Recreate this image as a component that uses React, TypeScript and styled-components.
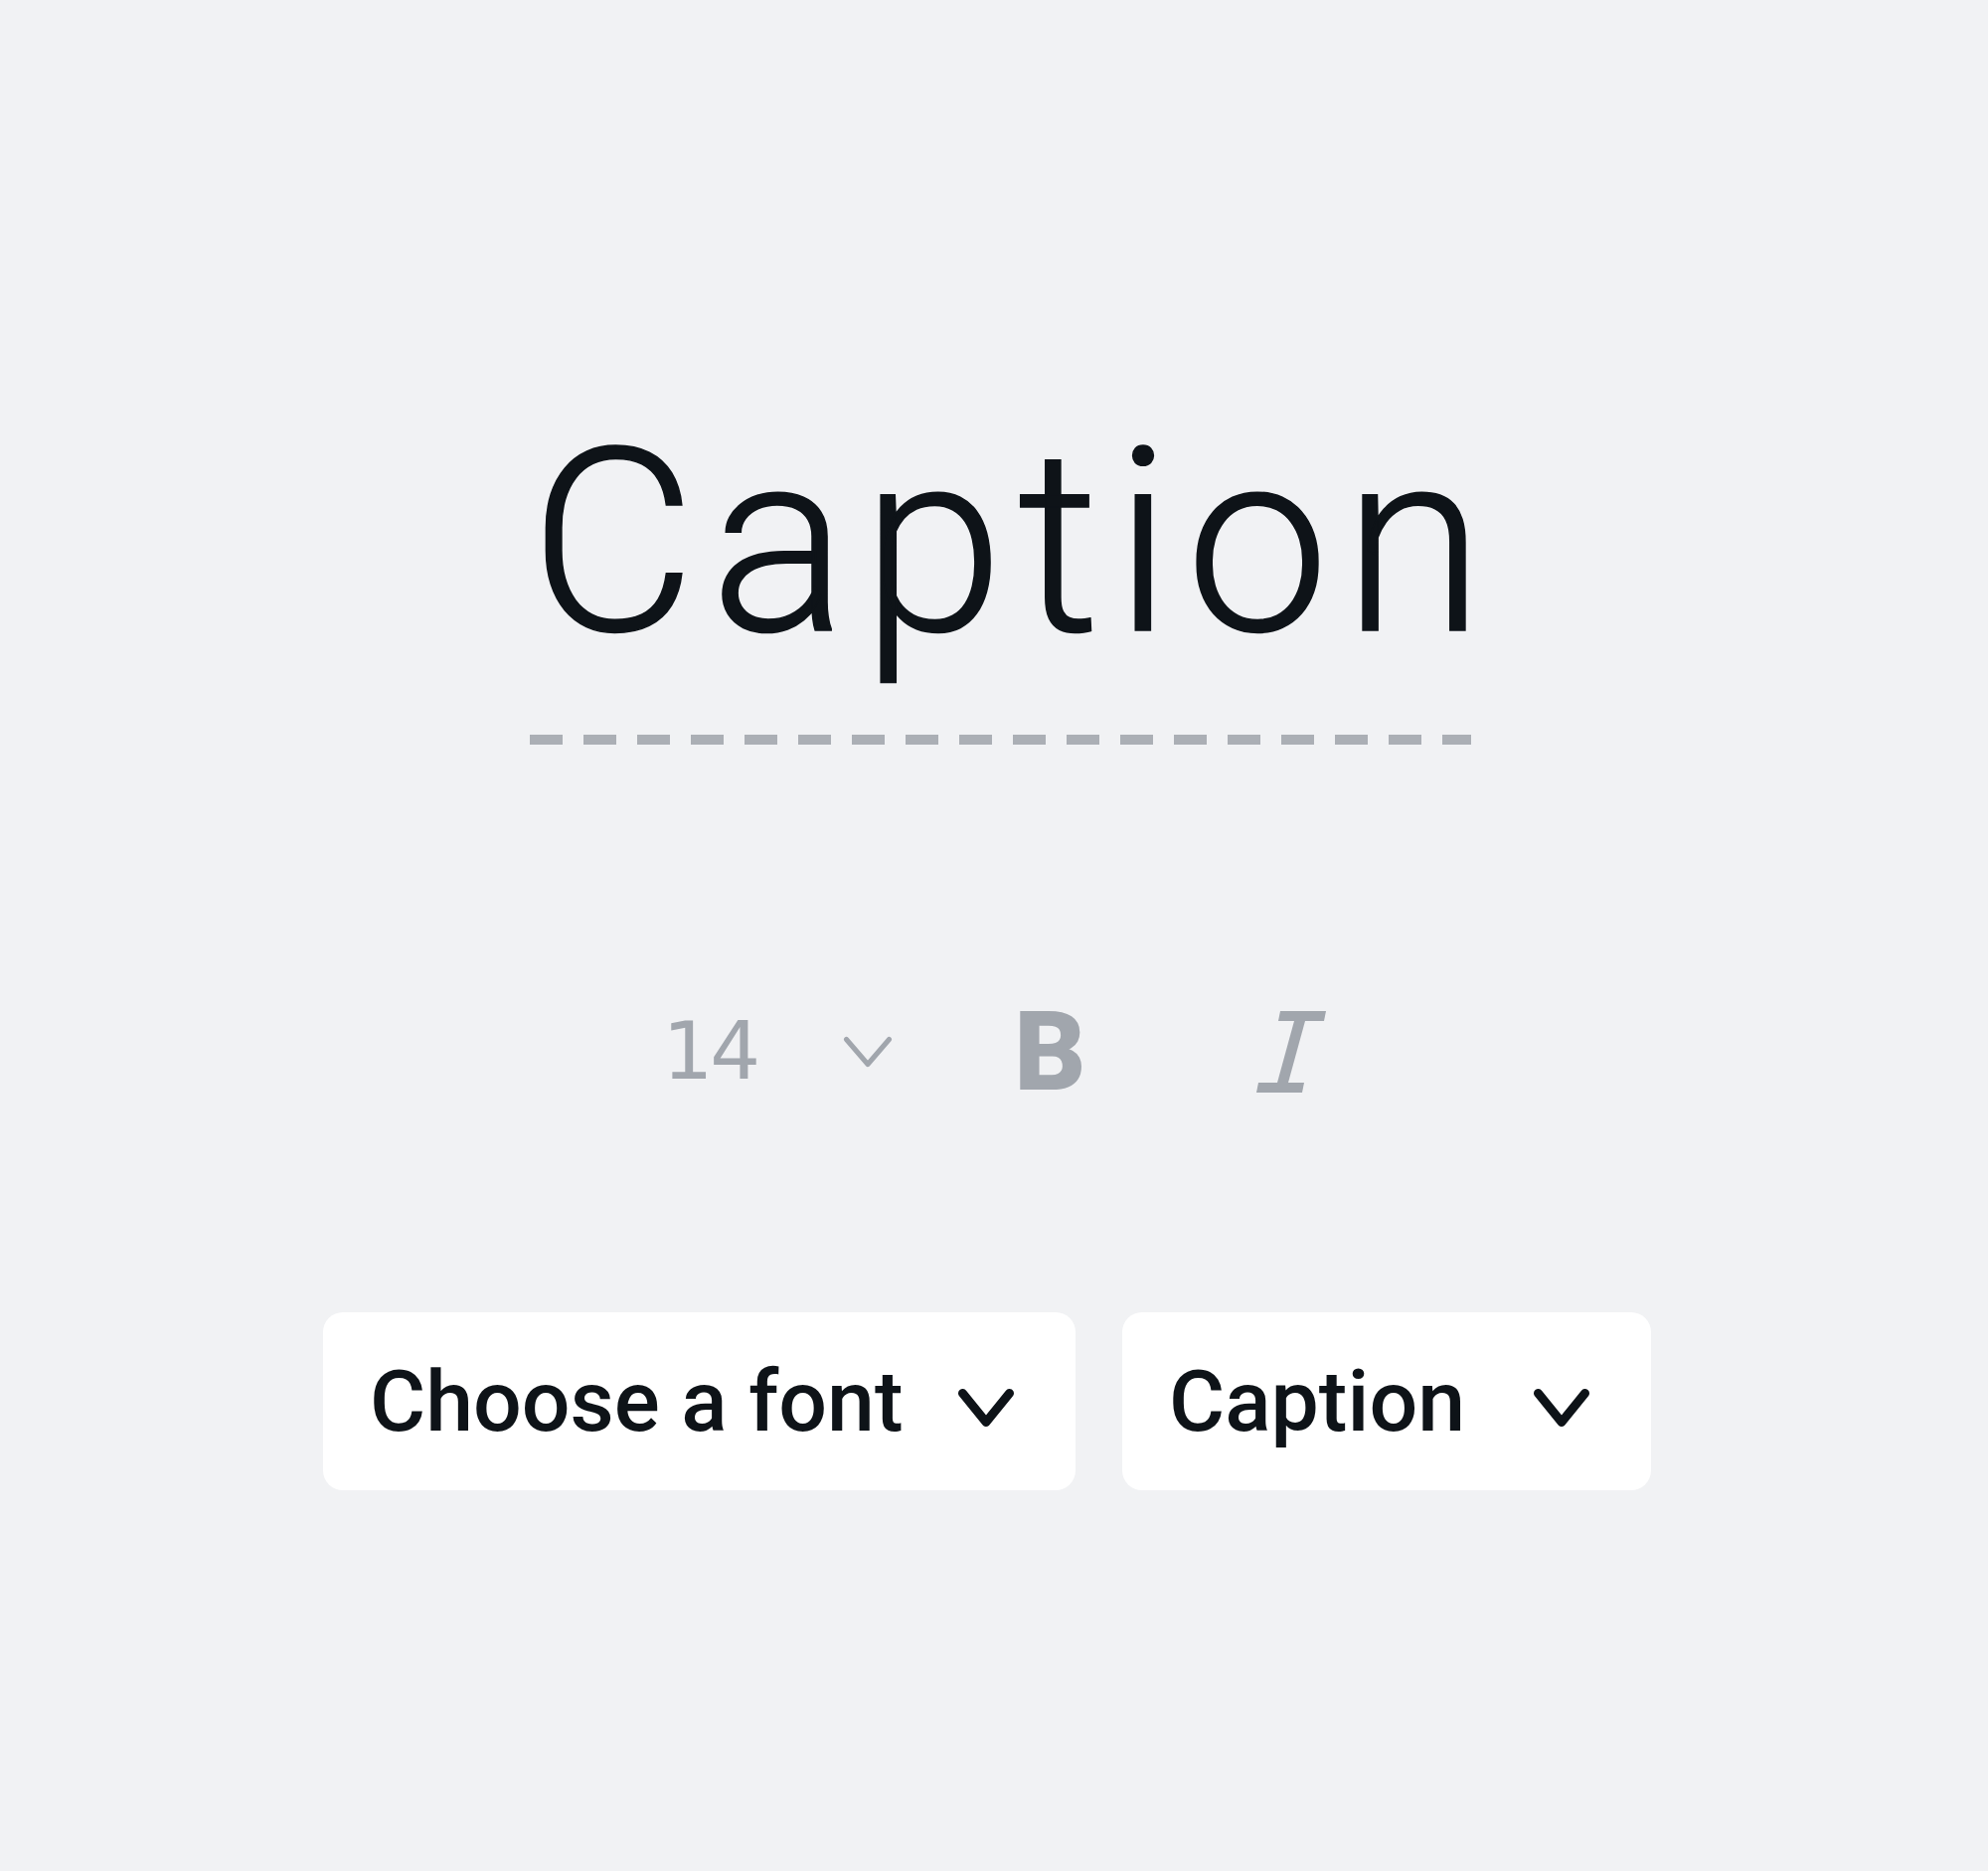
import styled, { createGlobalStyle } from "styled-components";

const GlobalStyle = createGlobalStyle`
  html, body {
    margin: 0;
    padding: 0;
    background: #f1f2f4;
  }
`;

const Page = styled.div`
  width: 2000px;
  height: 1882px;
  display: flex;
  flex-direction: column;
  align-items: center;
  padding-top: 396px;
  box-sizing: border-box;
  background: #f1f2f4;
  font-family: Roboto, "Liberation Sans", Arial, sans-serif;
`;

const TitleBlock = styled.div`
  display: flex;
  flex-direction: column;
  align-items: center;
  margin-left: 14px;
`;

const TitleText = styled.div`
  font-size: 258px;
  line-height: 300px;
  font-weight: 300;
  color: #0e1318;
  letter-spacing: 14px;
  margin-left: 26px;
  -webkit-text-stroke: 1.5px #0e1318;
`;

const DashLine = styled.div`
  width: 947px;
  height: 10px;
  margin-top: 43px;
  background: repeating-linear-gradient(
    to right,
    #abafb5 0 33px,
    transparent 33px 54px
  );
`;

const Toolbar = styled.div`
  display: flex;
  align-items: center;
  height: 100px;
  margin-top: 259px;
`;

const SizeSelect = styled.div`
  display: flex;
  align-items: center;
  gap: 86px;
  margin-right: 122px;
`;

const SizeValue = styled.span`
  font-family: "DejaVu Sans", sans-serif;
  font-size: 80px;
  letter-spacing: -3px;
  color: #a1a6ad;
  line-height: 1;
`;

const BoldGlyph = styled.span`
  font-size: 112px;
  font-weight: 900;
  color: #a1a6ad;
  line-height: 1;
  margin-right: 171px;
`;

const Selects = styled.div`
  display: flex;
  gap: 47px;
  margin-top: 212px;
  margin-right: 14px;
`;

const SelectButton = styled.div<{ $width: number }>`
  width: ${(p) => p.$width}px;
  height: 179px;
  box-sizing: border-box;
  display: flex;
  align-items: center;
  justify-content: space-between;
  padding: 0 61px 0 47px;
  background: #ffffff;
  border-radius: 20px;
  font-size: 86px;
  font-weight: 500;
  color: #0e1318;
`;

const ChevronSlot = styled.span`
  display: flex;
  margin-top: 12px;
`;

const Chevron = ({ w, h, stroke, color }: { w: number; h: number; stroke: number; color: string }) => (
  <svg width={w} height={h} viewBox={`0 0 ${w} ${h}`} fill="none">
    <path
      d={`M${stroke / 2 + 1} ${stroke / 2 + 1} L${w / 2} ${h - stroke / 2 - 1} L${w - stroke / 2 - 1} ${stroke / 2 + 1}`}
      stroke={color}
      strokeWidth={stroke}
      strokeLinecap="round"
      strokeLinejoin="round"
    />
  </svg>
);

const ItalicIcon = () => (
  <svg width="70" height="82" viewBox="0 0 70 82" fill="#a1a6ad">
    <polygon points="24,0 70,0 68,10 22,10" />
    <polygon points="2,72 48,72 46,82 0,82" />
    <polygon points="38,10 49,10 32,72 21,72" />
  </svg>
);

export default function App() {
  return (
    <>
      <GlobalStyle />
      <Page>
        <TitleBlock>
          <TitleText>Caption</TitleText>
          <DashLine />
        </TitleBlock>
        <Toolbar>
          <SizeSelect>
            <SizeValue>14</SizeValue>
            <Chevron w={50} h={32} stroke={5} color="#a1a6ad" />
          </SizeSelect>
          <BoldGlyph>B</BoldGlyph>
          <ItalicIcon />
        </Toolbar>
        <Selects>
          <SelectButton $width={757}>
            <span>Choose a font</span>
            <ChevronSlot>
              <Chevron w={58} h={40} stroke={9} color="#0e1318" />
            </ChevronSlot>
          </SelectButton>
          <SelectButton $width={532}>
            <span>Caption</span>
            <ChevronSlot>
              <Chevron w={58} h={40} stroke={9} color="#0e1318" />
            </ChevronSlot>
          </SelectButton>
        </Selects>
      </Page>
    </>
  );
}
